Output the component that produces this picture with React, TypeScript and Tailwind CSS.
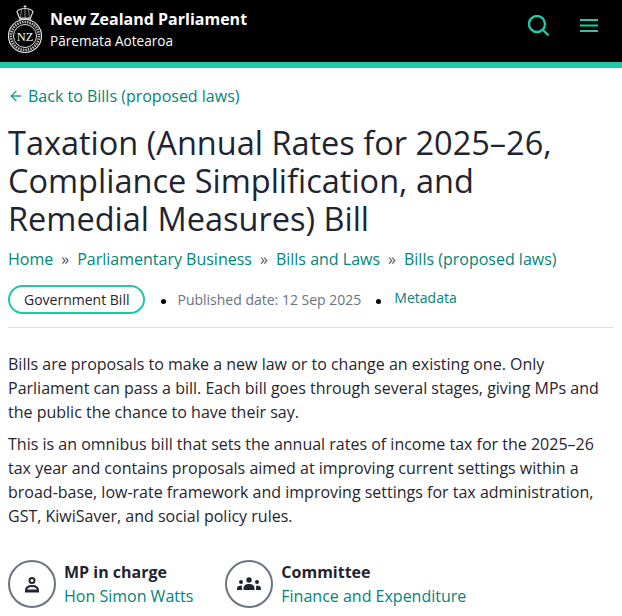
import React from "react";
import { ArrowLeft } from "lucide-react";

const font = { fontFamily: '"Open Sans", sans-serif' };

function Crest() {
  return (
    <svg width="36" height="50" viewBox="0 0 36 50" className="shrink-0">
      {/* crown */}
      <path d="M18 1v3M16.500 2.500h3" stroke="#ddd" strokeWidth="1" />
      <path d="M12.500 14 10 7.500c2-2.500 4.500-3 8-3s6 .5 8 3L23.500 14z" fill="none" stroke="#ddd" strokeWidth="1.200" />
      <path d="M18 5v9M14.500 5l-1 9M21.500 5l1 9" stroke="#aaa" strokeWidth=".8" />
      <path d="M12 15h12" stroke="#ddd" strokeWidth="1.500" />
      {/* seal */}
      <circle cx="18" cy="32" r="16.500" fill="none" stroke="#e5e5e5" strokeWidth="1.200" />
      <circle cx="18" cy="32" r="14" fill="none" stroke="#bbb" strokeWidth="2.600" strokeDasharray="1.500 1" />
      <circle cx="18" cy="32" r="11.500" fill="#000" stroke="#e5e5e5" strokeWidth="1" />
      <text x="18" y="36.500" textAnchor="middle" fontSize="12.500" fill="#fff" fontFamily='"Liberation Serif", serif'>NZ</text>
    </svg>
  );
}

function PersonIcon() {
  return (
    <svg width="16" height="17" viewBox="0 0 16 17" fill="none" stroke="#1f2530" strokeWidth="2">
      <circle cx="8" cy="4.500" r="2.500" />
      <path d="M2 14.500c0-3 2.500-4.500 6-4.500s6 1.500 6 4.500z" />
      <path d="M1 15.500h14" />
    </svg>
  );
}

function GroupIcon() {
  return (
    <svg width="24" height="14" viewBox="0 0 24 14" fill="#1f2530">
      <circle cx="12" cy="3" r="2.700" />
      <circle cx="4" cy="5" r="2" />
      <circle cx="20" cy="5" r="2" />
      <path d="M6.500 13v-2c0-2.500 2.500-4 5.500-4s5.500 1.500 5.500 4v2zM0 13v-1.500C0 9.500 1.500 8.500 4.800 8.500 4.800 10 5 11.500 5 13zM24 13v-1.500c0-2-1.500-3-4.800-3 0 1.500-.2 3-.2 4.500z" />
    </svg>
  );
}

function Person({ title, name, icon }: { title: string; name: string; icon: React.ReactNode }) {
  return (
    <div className="flex items-center gap-[8px]">
      <div className="flex h-12 w-12 items-center justify-center rounded-full border-2 border-[#6b7280]">{icon}</div>
      <div>
        <div className="text-base font-bold leading-6 text-[#1f2530]">{title}</div>
        <a className="block text-base leading-6 text-[#00857c]">{name}</a>
      </div>
    </div>
  );
}

export default function App() {
  return (
    <div className="h-[616px] overflow-hidden bg-white" style={font}>
      <header className="flex h-[68px] items-start justify-between border-b-[6px] border-[#1fc9a8] bg-black">
        <div className="flex items-start gap-[7px] pl-[7px] pt-[4px]">
          <Crest />
          <div className="pt-[4px] text-white">
            <div className="text-base font-bold leading-[22px]">New Zealand Parliament</div>
            <div className="mt-[1px] text-[13.6px] leading-[20px]">Pāremata Aotearoa</div>
          </div>
        </div>
        <div className="flex items-center gap-[30px] pr-[24px] pt-[15px]">
          <svg width="22" height="22" viewBox="0 0 22 22" fill="none" stroke="#1fc9a8" strokeWidth="2.400">
            <circle cx="9" cy="9" r="8" />
            <path d="M15 15 20.500 20.500" />
          </svg>
          <svg width="18" height="14" viewBox="0 0 18 14" fill="#1fc9a8">
            <rect y="0" width="18" height="2" />
            <rect y="5.500" width="18" height="2" />
            <rect y="11" width="18" height="2" />
          </svg>
        </div>
      </header>

      <main className="px-2">
        <a className="mt-[16px] flex items-center gap-[4px] text-base leading-6 text-[#00857c]">
          <ArrowLeft size={16} strokeWidth={2} className="text-[#2a9d8f]" />
          Back to Bills (proposed laws)
        </a>
        <h1 className="mt-[16px] text-[32.5px] leading-[38px] font-normal text-[#1f2530]">
          Taxation (Annual Rates for 2025–26, Compliance Simplification, and Remedial Measures) Bill
        </h1>
        <nav className="mt-[9px] flex items-center text-base leading-6 text-[#00857c]">
          <a>Home</a>
          <span className="mx-[8px] text-[#4b5563]">»</span>
          <a>Parliamentary Business</a>
          <span className="mx-[8px] text-[#4b5563]">»</span>
          <a>Bills and Laws</a>
          <span className="mx-[8px] text-[#4b5563]">»</span>
          <a>Bills (proposed laws)</a>
        </nav>
        <div className="mt-[14px] flex items-center border-b border-[#e0e0e0] pb-[13px]">
          <span className="flex h-[29px] items-center rounded-full border-2 border-[#1fc9a8] px-[14px] text-sm text-[#1f2530]">
            Government Bill
          </span>
          <span className="ml-[16px] mt-[4px] h-[5px] w-[5px] rounded-full bg-black" />
          <span className="ml-[11px] text-sm text-[#6b7280]">Published date: 12 Sep 2025</span>
          <span className="ml-[15px] mt-[4px] h-[5px] w-[5px] rounded-full bg-black" />
          <a className="ml-[13px] -mt-[4px] text-sm text-[#00857c]">Metadata</a>
        </div>
        <p className="mt-[24px] text-base leading-6 text-[#1f2530]">
          Bills are proposals to make a new law or to change an existing one. Only Parliament can pass a bill. Each bill goes through several stages, giving MPs and the public the chance to have their say.
        </p>
        <p className="mt-[8px] text-base leading-6 text-[#1f2530]">
          This is an omnibus bill that sets the annual rates of income tax for the 2025–26 tax year and contains proposals aimed at improving current settings within a broad-base, low-rate framework and improving settings for tax administration, GST, KiwiSaver, and social policy rules.
        </p>
        <div className="mt-[32px] flex gap-[32px]">
          <Person title="MP in charge" name="Hon Simon Watts" icon={<PersonIcon />} />
          <Person title="Committee" name="Finance and Expenditure" icon={<GroupIcon />} />
        </div>
      </main>
    </div>
  );
}
